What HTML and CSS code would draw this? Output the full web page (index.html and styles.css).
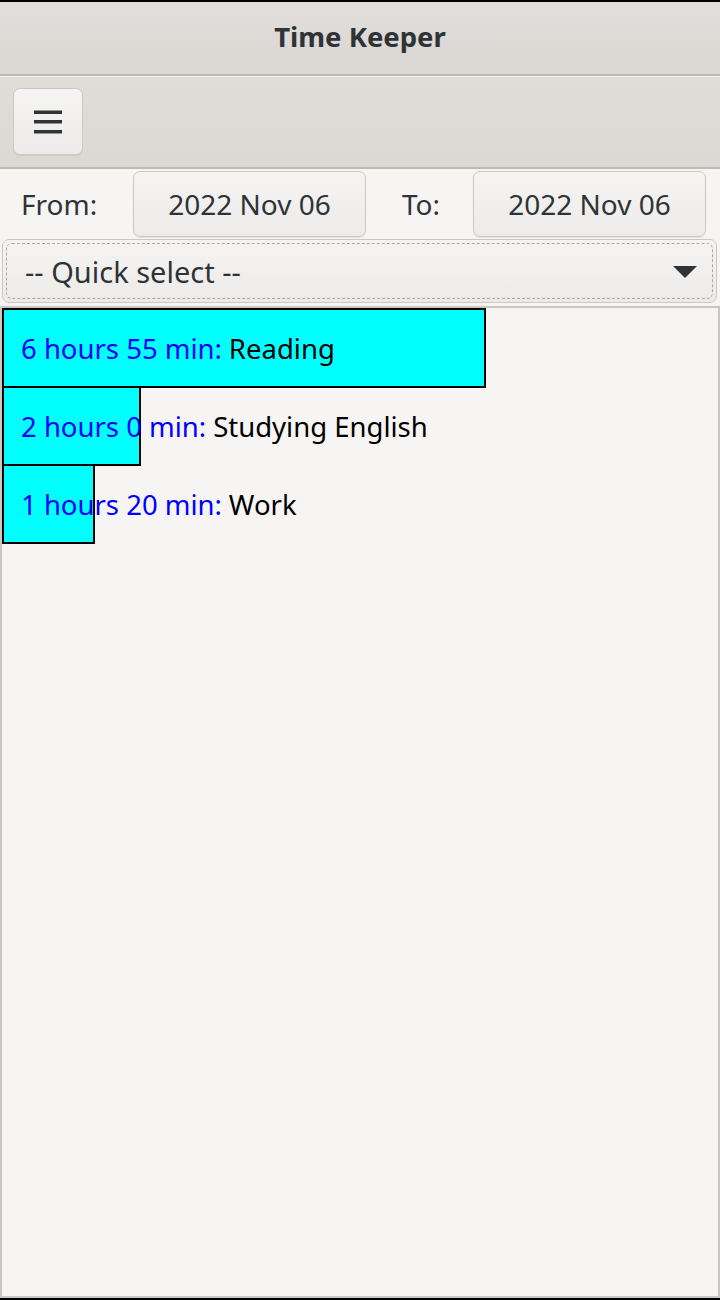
FILE: index.html
```html
<!DOCTYPE html>
<html>
<head>
<meta charset="utf-8">
<link rel="stylesheet" href="styles.css">
</head>
<body>
<div class="app">
  <header class="headerbar"><span class="title">Time Keeper</span></header>
  <div class="toolbar">
    <button class="btn menu-btn" aria-label="Menu">
      <svg width="28" height="24" viewBox="0 0 28 24"><rect x="0" y="0.5" width="28" height="3.5" fill="#2e3436"/><rect x="0" y="10" width="28" height="3.5" fill="#2e3436"/><rect x="0" y="20" width="28" height="3.5" fill="#2e3436"/></svg>
    </button>
  </div>
  <div class="daterow">
    <span class="label">From:</span>
    <button class="btn date-btn">2022 Nov 06</button>
    <span class="label to">To:</span>
    <button class="btn date-btn">2022 Nov 06</button>
  </div>
  <div class="combo">
    <div class="focus">
      <span>-- Quick select --</span>
      <svg class="arrow" width="24" height="13" viewBox="0 0 24 13"><polygon points="0,0 24,0 12,12" fill="#2e3436"/></svg>
    </div>
  </div>
  <div class="list">
    <div class="bar" style="width:484px"><span class="time">6 hours 55 min:</span> <span class="task">Reading</span></div>
    <div class="bar" style="width:139px"><span class="time">2 hours 0 min:</span> <span class="task">Studying English</span></div>
    <div class="bar" style="width:93px"><span class="time">1 hours 20 min:</span> <span class="task">Work</span></div>
  </div>
</div>
</body>
</html>
```

FILE: styles.css
```css
html, body {
  margin: 0;
  padding: 0;
  background: #000;
}
body {
  padding: 2px 0;
  font-family: "Noto Sans", "Open Sans", sans-serif;
  color: #2e3436;
}
.app {
  height: 1296px;
  background: #f6f5f4;
  display: flex;
  flex-direction: column;
  overflow: hidden;
}
.headerbar {
  height: 74px;
  flex: none;
  box-sizing: border-box;
  padding-bottom: 4px;
  background: linear-gradient(#e1dedb, #dad6d2);
  border-bottom: 2px solid #bfb8b1;
  display: flex;
  align-items: center;
  justify-content: center;
}
.title {
  font-weight: bold;
  font-size: 27.5px;
  color: #2e3436;
}
.toolbar {
  flex: none;
  height: 93px;
  box-sizing: border-box;
  border-top: 1px solid #f3f1ef;
  border-bottom: 2px solid #c0b9b2;
  background: linear-gradient(#e0ddd9, #dcd8d4);
  padding: 11px 0 0 13px;
}
.btn {
  font-family: inherit;
  color: #2e3436;
  background: linear-gradient(#f5f4f3, #edebe9);
  border: 1px solid #cdc7c2;
  border-radius: 7px;
  box-shadow: 0 1px 1px rgba(0,0,0,0.07);
  padding: 0;
  margin: 0;
}
.menu-btn {
  width: 70px;
  height: 67px;
  display: flex;
  align-items: center;
  justify-content: center;
}
.daterow {
  flex: none;
  height: 69px;
  padding: 2px 0 1px 0;
  box-sizing: border-box;
  display: flex;
  align-items: stretch;
}
.label {
  font-size: 28px;
  display: flex;
  align-items: center;
  padding-left: 21px;
  width: 133px;
  box-sizing: border-box;
}
.label.to {
  padding-left: 36px;
  width: 107px;
}
.date-btn {
  width: 233px;
  font-size: 28px;
}
.combo {
  flex: none;
  margin: 1px 3px 0 2px;
  height: 64px;
  box-sizing: border-box;
  border: 1px solid #cdc7c2;
  border-radius: 7px;
  background: linear-gradient(#f5f4f3, #edebe9);
  padding: 3px;
}
.focus {
  height: 100%;
  box-sizing: border-box;
  border: 1px dashed #a9a8a6;
  border-radius: 6px;
  display: flex;
  align-items: center;
  justify-content: space-between;
  padding: 0 15px 0 18px;
  font-size: 29px;
}
.arrow {
  display: block;
  margin-top: 2px;
}
.list {
  flex: 1;
  margin-top: 3px;
  border: 2px solid #cdc7c2;
  padding: 0 1px 0 0;
  background: #f6f5f4;
}
.bar {
  height: 80px;
  box-sizing: border-box;
  background: #00ffff;
  border: 2px solid #000;
  padding-left: 17px;
  display: flex;
  align-items: center;
  white-space: nowrap;
  font-size: 27.5px;
  overflow: visible;
}
.bar + .bar {
  margin-top: -2px;
}
.time {
  color: #0000ff;
}
.task {
  color: #000;
  margin-left: 0.25em;
}
```
